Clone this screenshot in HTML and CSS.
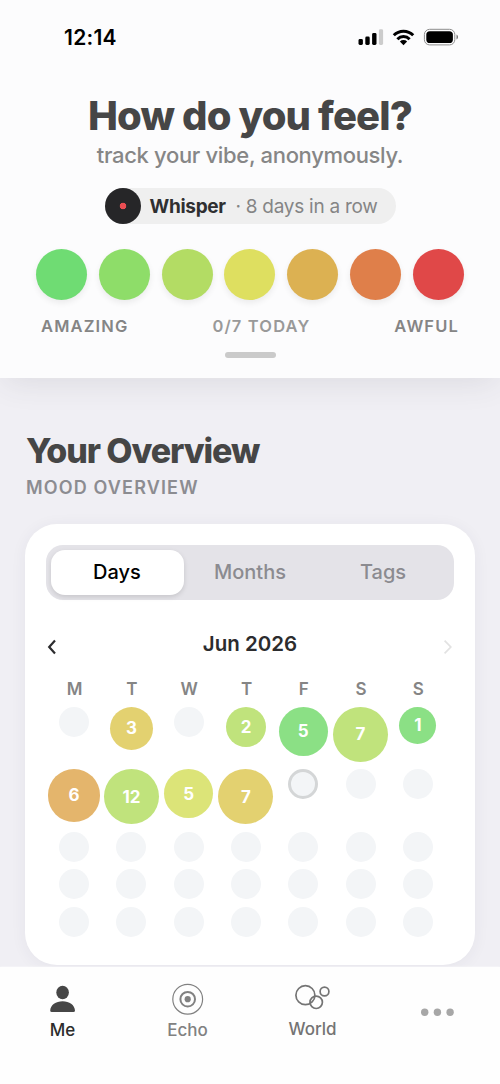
FILE: index.html
```html
<!DOCTYPE html>
<html lang="en">
<head>
<meta charset="utf-8">
<title>How do you feel?</title>
<link rel="stylesheet" href="styles.css">
</head>
<body>
<div class="phone">
  <header class="top">
    <div class="status">
      <span class="clock">12:14</span>
      <svg class="status-icons" width="102" height="20" viewBox="0 0 102 20">
        <rect x="0.5" y="11" width="4.4" height="6" rx="1.4"/>
        <rect x="7.3" y="8.5" width="4.4" height="8.5" rx="1.4"/>
        <rect x="14.1" y="5" width="4.4" height="12" rx="1.4"/>
        <rect x="20.9" y="1.3" width="4.2" height="15.7" rx="1.4" fill="#cccccc"/>
        <g fill="none" stroke="#000" stroke-width="3">
          <path d="M35.8 7.3a13.6 13.6 0 0 1 19.4 0"/>
          <path d="M39.4 11.2a8.5 8.5 0 0 1 12.2 0"/>
        </g>
        <path d="M41.9 13.5a5.2 5.2 0 0 1 7.2 0l-3.6 3.8z"/>
        <rect x="66.4" y="1.3" width="30.4" height="15.6" rx="5.2" fill="none" stroke="#8d8d8d"/>
        <rect x="68.3" y="3.2" width="26.6" height="11.8" rx="3.6"/>
        <path d="M98.5 6.6c2 .8 2 4.2 0 5z" fill="#777"/>
      </svg>
    </div>
    <h1 class="title">How do you feel?</h1>
    <p class="subtitle">track your vibe, anonymously.</p>
    <div class="streak">
      <span class="disc"></span>
      <span class="streak-name">Whisper</span>
      <span class="streak-days">· 8 days in a row</span>
    </div>
    <div class="moods">
      <span class="mood m1"></span><span class="mood m2"></span><span class="mood m3"></span><span class="mood m4"></span><span class="mood m5"></span><span class="mood m6"></span><span class="mood m7"></span>
    </div>
    <div class="scale">
      <span class="amazing">AMAZING</span><span class="count">0/7 TODAY</span><span class="awful">AWFUL</span>
    </div>
    <div class="handle"></div>
  </header>

  <main class="overview">
    <h2 class="heading">Your Overview</h2>
    <p class="kicker">MOOD OVERVIEW</p>
    <section class="card">
      <div class="tabs">
        <span class="tab active">Days</span><span class="tab months">Months</span><span class="tab">Tags</span>
      </div>
      <div class="month">
        <svg width="10" height="16" viewBox="0 0 10 16"><path d="M8 1.6 2.2 8 8 14.4" fill="none" stroke="#2c2c2e" stroke-width="2.2"/></svg>
        <span class="month-name">Jun 2026</span>
        <svg width="10" height="16" viewBox="0 0 10 16"><path d="M1.600 1.600 7.800 8 1.600 14.400" fill="none" stroke="#e2e2e2" stroke-width="1.700"/></svg>
      </div>
      <div class="grid weekdays"><span>M</span><span>T</span><span>W</span><span>T</span><span>F</span><span>S</span><span>S</span></div>
      <div class="grid days">
        <i class="day"></i><i class="day s43 amber">3</i><i class="day"></i><i class="day s40 lime">2</i><i class="day s49 green">5</i><i class="day s55 lime">7</i><i class="day s37 green">1</i>
        <i class="day s52 orange">6</i><i class="day s55 lime">12</i><i class="day s49 yellow">5</i><i class="day s55 amber">7</i><i class="day today"></i><i class="day"></i><i class="day"></i>
        <i class="day"></i><i class="day"></i><i class="day"></i><i class="day"></i><i class="day"></i><i class="day"></i><i class="day"></i>
        <i class="day"></i><i class="day"></i><i class="day"></i><i class="day"></i><i class="day"></i><i class="day"></i><i class="day"></i>
        <i class="day"></i><i class="day"></i><i class="day"></i><i class="day"></i><i class="day"></i><i class="day"></i><i class="day"></i>
      </div>
    </section>
  </main>

  <nav class="nav">
    <a class="item me">
      <svg width="36" height="36" viewBox="0 0 36 36" fill="#464646"><ellipse cx="17.600" cy="11.500" rx="6.300" ry="6.700"/><path d="M5.200 29.500C5.600 23.900 10.900 20.300 17.600 20.300s12 3.600 12.400 9.200q0 1.600-1.600 1.600H6.800q-1.600 0-1.600-1.600z"/></svg>
      <span>Me</span>
    </a>
    <a class="item">
      <svg width="36" height="36" viewBox="0 0 36 36" fill="none" stroke="#818181"><circle cx="17.700" cy="18.200" r="14.900" stroke-width="1.200"/><circle cx="17.700" cy="18.200" r="7.300" stroke-width="2"/><circle cx="17.700" cy="18.200" r="3.100" fill="#818181" stroke="none"/></svg>
      <span>Echo</span>
    </a>
    <a class="item world">
      <svg width="36" height="36" viewBox="0 0 36 36" fill="none" stroke="#747474" stroke-width="1.700"><circle cx="10.400" cy="14.200" r="9.500"/><circle cx="21.200" cy="21.300" r="6.200"/><circle cx="29.500" cy="10.500" r="4.400"/></svg>
      <span>World</span>
    </a>
    <a class="item more">
      <svg width="36" height="12" viewBox="0 0 36 12" fill="#a7a7a7"><circle cx="4.700" cy="6.300" r="3.700"/><circle cx="17.400" cy="6.300" r="3.700"/><circle cx="30.100" cy="6.300" r="3.700"/></svg>
    </a>
  </nav>
</div>
</body>
</html>
```
FILE: styles.css
```css
* { box-sizing: border-box; margin: 0; padding: 0; }
body { font-family: Inter, "Liberation Sans", sans-serif; background: #f0eff4; }
.phone { width: 500px; height: 1084px; overflow: hidden; display: flex; flex-direction: column; background: #f0eff4; }
svg { display: block; }

.top { position: relative; height: 378px; flex: none; background: #fcfcfd; display: flex; flex-direction: column; align-items: center; box-shadow: 0 8px 30px -4px rgba(60, 60, 75, .11); }
.status { width: 100%; height: 76px; padding: 0 40px 0 64px; display: flex; align-items: center; justify-content: space-between; }
.clock { font-size: 21px; font-weight: 600; color: #000; line-height: 24px; letter-spacing: .25px; }
.title { margin-top: 16px; font-size: 40px; line-height: 48px; font-weight: 800; letter-spacing: -.85px; color: #464646; white-space: nowrap; }
.subtitle { margin-top: 2px; font-size: 22px; line-height: 27px; font-weight: 500; letter-spacing: -.33px; color: #868686; white-space: nowrap; }
.streak { margin-top: 19px; width: 291px; height: 36px; border-radius: 18px; background: #efefef; display: flex; align-items: center; font-size: 19px; white-space: nowrap; }
.disc { width: 36px; height: 36px; border-radius: 50%; background: radial-gradient(circle, #e84d52 0 3px, #262628 3.6px); margin-right: 9px; }
.streak-name { font-weight: 700; color: #2f2f31; width: 86px; letter-spacing: -.3px; }
.streak-days { color: #858585; letter-spacing: -.27px; }
.moods { margin-top: 25px; width: 428px; display: flex; justify-content: space-between; }
.mood { width: 51px; height: 51px; border-radius: 50%; box-shadow: 0 3px 6px rgba(0, 0, 0, .07); }
.m1 { background: #6fdc73; }
.m2 { background: #8edd69; }
.m3 { background: #b3dc64; }
.m4 { background: #dedf60; }
.m5 { background: #dcb152; }
.m6 { background: #df7f4a; }
.m7 { background: #e04848; }
.scale { width: 418px; margin-top: 16px; display: flex; justify-content: space-between; font-size: 16.5px; line-height: 20px; font-weight: 600; letter-spacing: 1.15px; color: #858585; }
.count { color: #999; }
.handle { width: 51px; height: 6px; border-radius: 3px; background: #cacaca; margin-top: 16px; }

.overview { flex: none; height: 589px; overflow: hidden; padding: 51.5px 25px 0; }
.heading { font-size: 34px; line-height: 42px; font-weight: 800; letter-spacing: -1.1px; color: #464646; padding-left: 1px; }
.kicker { margin-top: 4.5px; font-size: 18px; line-height: 23px; font-weight: 600; letter-spacing: 1.15px; color: #8c8c91; padding-left: 1px; }
.card { margin-top: 25px; height: 441px; border-radius: 32px; background: #fff; padding: 20.5px 21px 0; box-shadow: 0 2px 16px rgba(50, 50, 80, .06); }
.tabs { height: 55px; border-radius: 17px; background: #e4e3e8; padding: 5px 4.5px; display: flex; }
.tab { flex: 1; display: flex; align-items: center; justify-content: center; font-size: 20px; font-weight: 500; color: #8b8b90; }
.active { background: #fff; color: #000; border-radius: 14px; box-shadow: 0 2px 5px rgba(0, 0, 0, .13); }
.month { margin-top: 31px; padding: 0 1px; display: flex; align-items: center; justify-content: space-between; height: 26px; }
.month svg { position: relative; top: 3px; }
.month-name { font-size: 20.5px; font-weight: 600; color: #2c2c2e; }
.grid { width: 401px; display: grid; grid-template-columns: repeat(7, 1fr); justify-items: center; }
.weekdays { margin-top: 22px; font-size: 17px; line-height: 21px; font-weight: 600; color: #858585; }
.days { margin-top: 7px; margin-left: -.5px; row-gap: 7.5px; align-items: start; grid-template-rows: 55px 55px 30px 30px 30px; }
.day { width: 30px; height: 30px; border-radius: 50%; background: #f3f5f7; display: flex; align-items: center; justify-content: center; color: #fff; font-style: normal; font-weight: 700; font-size: 17px; }
.s37 { width: 37px; height: 37px; }
.s40 { width: 40.5px; height: 40.5px; }
.s43 { width: 43px; height: 43px; }
.s49 { width: 49px; height: 49px; }
.s52 { width: 52.5px; height: 52.5px; }
.s55 { width: 55px; height: 55px; }
.green { background: #8be085; }
.lime { background: #c0e37c; }
.yellow { background: #dce478; }
.amber { background: #e3d170; }
.orange { background: #e4b56c; }
.today { border: 3px solid #d4d6d7; }

.nav { flex: 1; background: #fefefe; display: flex; padding-top: 14px; position: relative; box-shadow: 0 0 2px rgba(255, 255, 255, .8); }
.item { width: 125px; display: flex; flex-direction: column; align-items: center; font-size: 17px; line-height: 21px; font-weight: 500; color: #818181; }
.item span { margin-top: 3px; }
.me { color: #2c2c2c; }
.world { color: #747474; }
.world span { margin-top: 2px; }
.more { padding-top: 25px; }
```
